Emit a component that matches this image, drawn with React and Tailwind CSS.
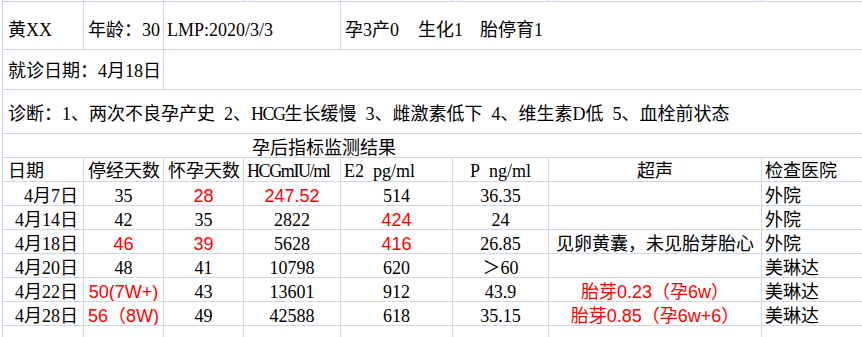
import React from "react";

const RED = "text-[#ff0000] font-['Liberation_Sans','Noto_Sans_CJK_SC',sans-serif]";
const GRID = "grid grid-cols-[81px_80px_80px_97px_112px_96px_213px_1fr]";

const rows = [
  { d: "4月7日", a: "35", b: "28", br: 1, h: "247.52", hr: 1, e: "514", p: "36.35", u: "", hosp: "外院" },
  { d: "4月14日", a: "42", b: "35", h: "2822", e: "424", er: 1, p: "24", u: "", hosp: "外院" },
  { d: "4月18日", a: "46", ar: 1, b: "39", br: 1, h: "5628", e: "416", er: 1, p: "26.85", u: "见卵黄囊，未见胎芽胎心", hosp: "外院" },
  { d: "4月20日", a: "48", b: "41", h: "10798", e: "620", p: "＞60", u: "", hosp: "美琳达" },
  { d: "4月22日", a: "50(7W+)", ar: 1, b: "43", h: "13601", e: "912", p: "43.9", u: "胎芽0.23（孕6w）", ur: 1, hosp: "美琳达" },
  { d: "4月28日", a: "56（8W)", ar: 1, b: "49", h: "42588", e: "618", p: "35.15", u: "胎芽0.85（孕6w+6）", ur: 1, hosp: "美琳达" },
];

function Cell({ children, className = "", last = false }) {
  return (
    <div
      className={`flex items-center overflow-hidden whitespace-nowrap ${last ? "" : "border-r border-[#d0d7e5]"} ${className}`}
    >
      {children}
    </div>
  );
}

function EmptyRow({ h }) {
  return (
    <div className={`${GRID} ${h}`}>
      <Cell />
      <Cell />
      <Cell />
      <Cell />
      <Cell />
      <Cell />
      <Cell />
      <Cell last />
    </div>
  );
}

export default function App() {
  return (
    <div className="w-[862px] h-[337px] overflow-hidden bg-white text-black text-[18px] leading-none font-['Liberation_Serif','Noto_Sans_CJK_SC',serif]">
      <div className="ml-[2px] h-[337px] border-l border-[#d0d7e5]">
        {/* partial top row */}
        <div className={`${GRID} h-[2px] border-b border-[#c3cddb]`}>
          <Cell />
          <Cell />
          <Cell />
          <Cell />
          <Cell />
          <Cell />
          <Cell />
          <Cell last />
        </div>

        {/* row 1 */}
        <div className={`${GRID} h-[48px] border-b border-[#d0d7e5]`}>
          <Cell className="pl-[5px] pt-[8px]">黄XX</Cell>
          <Cell className="pl-[4px] pt-[8px]">年龄：30</Cell>
          <Cell className="col-span-2 pl-[3px] pt-[8px]">LMP:2020/3/3</Cell>
          <Cell className="col-span-4 pl-[4px] pt-[8px]" last>
            <span>孕3产0</span>
            <span className="ml-[19px]">生化1</span>
            <span className="ml-[17px]">胎停育1</span>
          </Cell>
        </div>

        {/* row 2 */}
        <div className={`${GRID} h-[40px] border-b border-[#d0d7e5]`}>
          <Cell className="col-span-2 pl-[5px] pt-[3px]">就诊日期：4月18日</Cell>
          <Cell className="col-span-6" last />
        </div>

        {/* row 3 */}
        <div className="flex h-[44px] items-center border-b border-[#d0d7e5] pl-[5px] pt-[4px] whitespace-nowrap">
          诊断：1、两次不良孕产史{"\u2002"}2、<span className="tracking-[-1.5px]">HCG</span>生长缓慢{"\u2002"}3、雌激素低下{"\u2002"}4、维生素D低{"\u2002"}5、血栓前状态
        </div>

        {/* title */}
        <div className="flex h-[24px] items-center border-b border-[#d0d7e5] pl-[249px] pt-[4px]">
          孕后指标监测结果
        </div>

        {/* header */}
        <div className={`${GRID} h-[24px] border-b border-[#d0d7e5]`}>
          <Cell className="pl-[5px] pt-[3px]">日期</Cell>
          <Cell className="pl-[4px] pt-[3px]">停经天数</Cell>
          <Cell className="pl-[4px] pt-[3px]">怀孕天数</Cell>
          <Cell className="pl-[3px] pt-[3px] tracking-[-1.4px]">HCGmIU/ml</Cell>
          <Cell className="pl-[3px] pt-[3px]">E2{"\u2002"}pg/ml</Cell>
          <Cell className="justify-center pt-[3px]">P{"\u2002"}ng/ml</Cell>
          <Cell className="justify-center pt-[3px]">超声</Cell>
          <Cell className="pl-[3px] pt-[3px]" last>检查医院</Cell>
        </div>

        {rows.map((r) => (
          <div key={r.d} className={`${GRID} h-[24px] border-b border-[#d0d7e5]`}>
            <Cell className="justify-end pr-[5px] pt-[4px]">{r.d}</Cell>
            <Cell className={`justify-center pt-[4px] ${r.ar ? RED : ""}`}>{r.a}</Cell>
            <Cell className={`justify-center pt-[4px] ${r.br ? RED : ""}`}>{r.b}</Cell>
            <Cell className={`justify-center pt-[4px] ${r.hr ? RED : ""}`}>{r.h}</Cell>
            <Cell className={`justify-center pt-[4px] ${r.er ? RED : ""}`}>{r.e}</Cell>
            <Cell className="justify-center pt-[4px]">{r.p}</Cell>
            <Cell className={`justify-center pt-[4px] ${r.ur ? RED : ""}`}>{r.u}</Cell>
            <Cell className="pl-[3px] pt-[4px]" last>{r.hosp}</Cell>
          </div>
        ))}

        <EmptyRow h="h-[12px]" />
      </div>
    </div>
  );
}
